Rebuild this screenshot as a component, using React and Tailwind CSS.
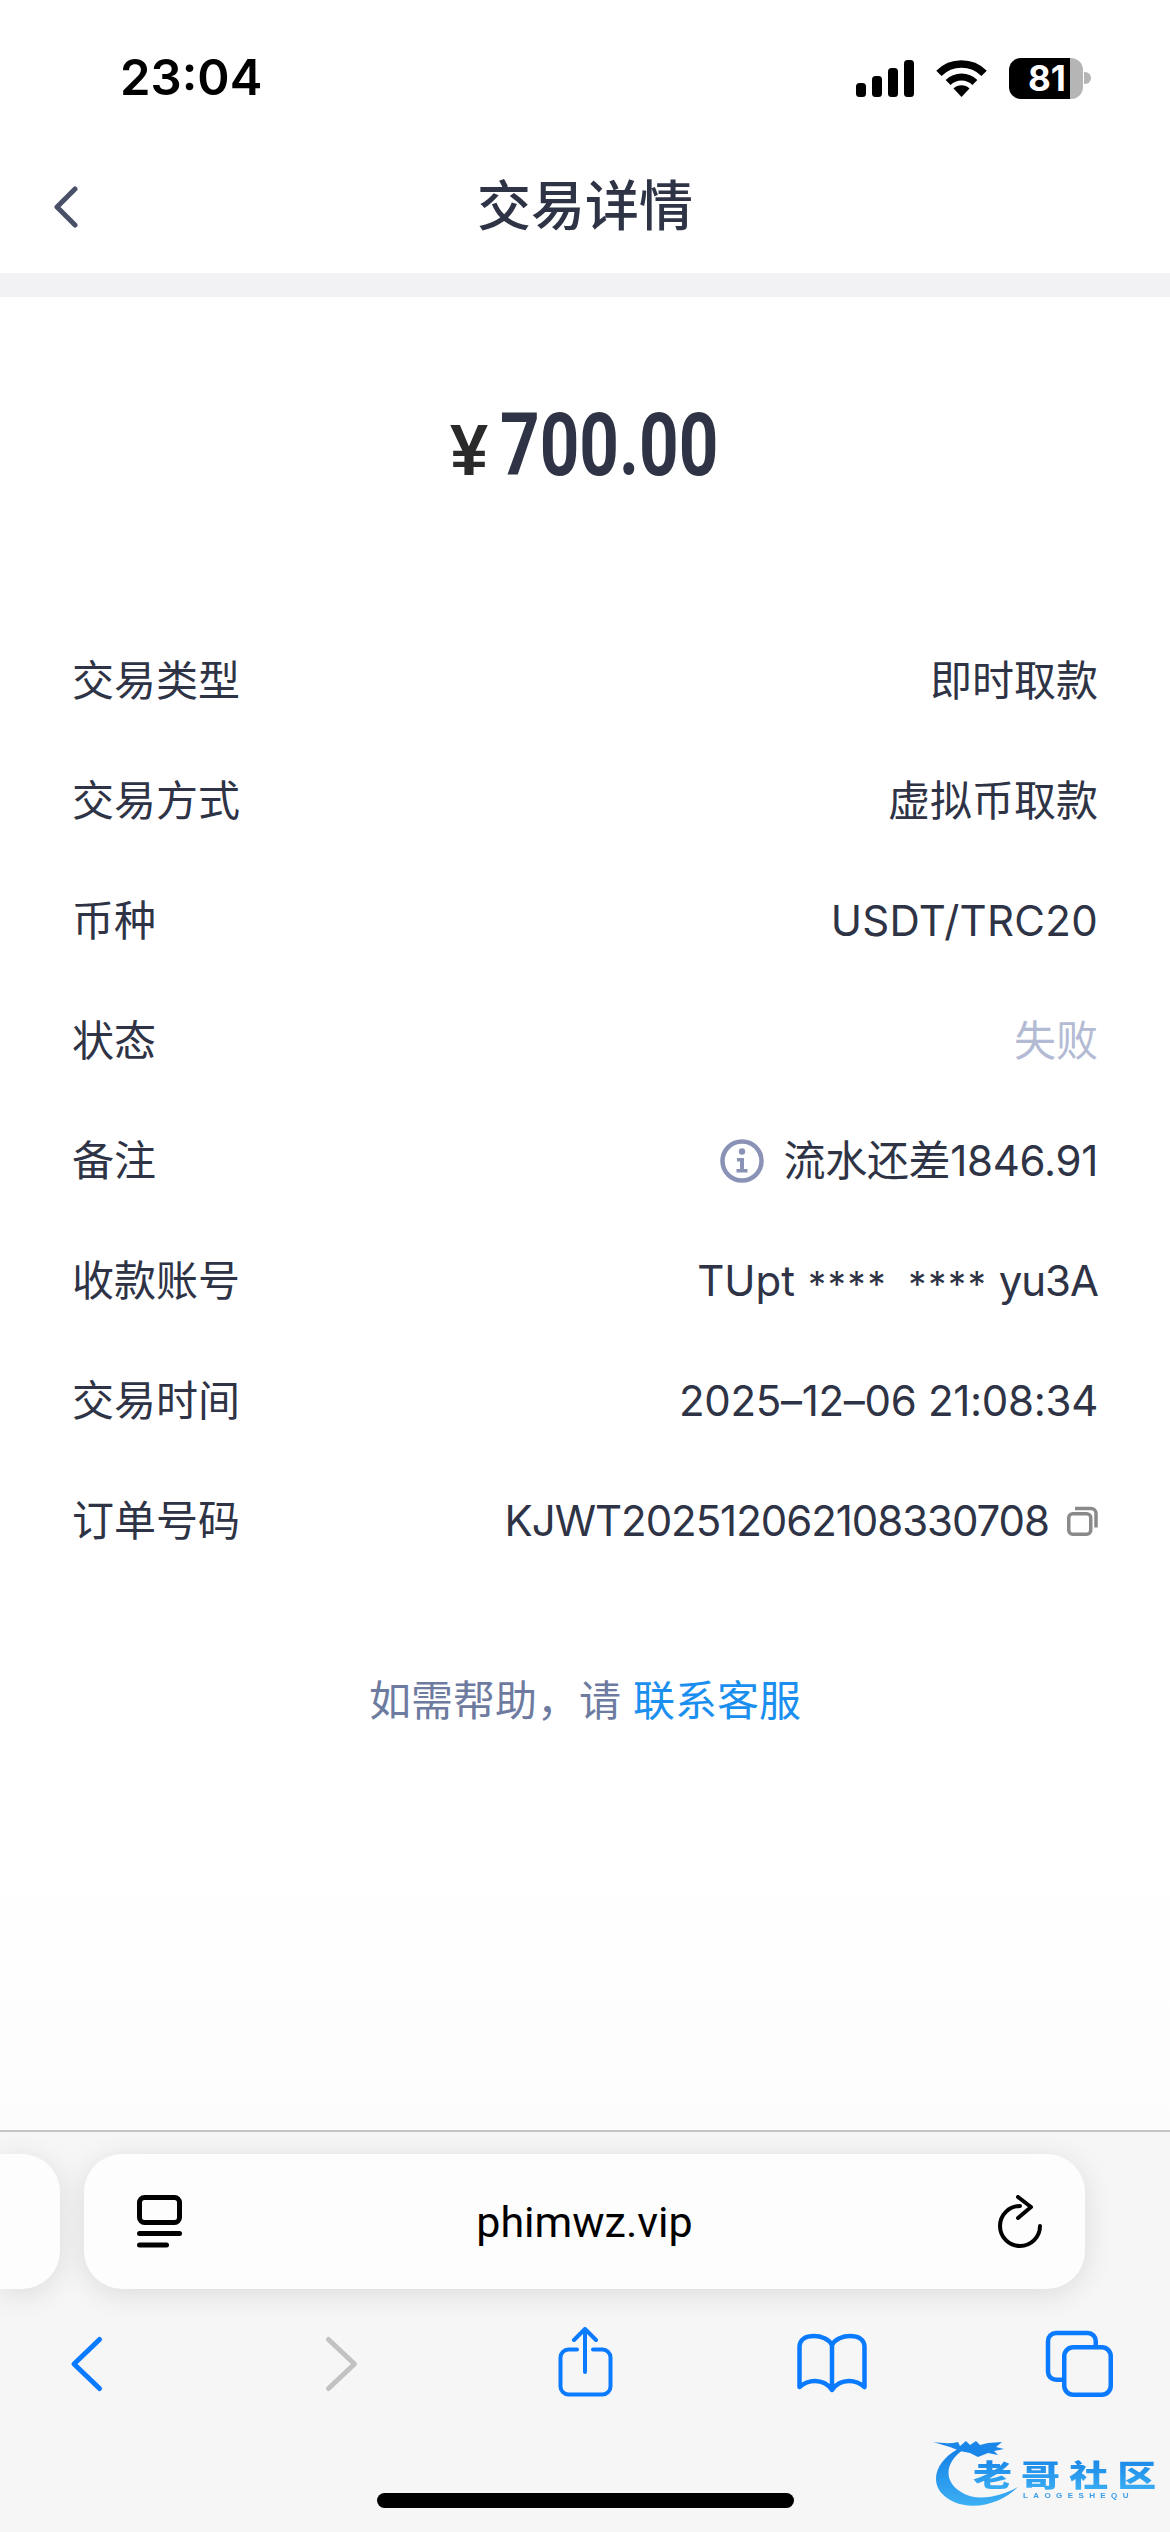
import React from "react";

const FONT = { fontFamily: 'Inter, "Noto Sans CJK SC", sans-serif' };

const rows = [
  { label: "交易类型", value: "即时取款" },
  { label: "交易方式", value: "虚拟币取款" },
  { label: "币种", value: "USDT/TRC20", track: "tracking-[0.3px]" },
  { label: "状态", value: "失败", kind: "muted" },
  { label: "备注", value: "流水还差1846.91", kind: "info", track: "tracking-[-0.3px]" },
  { label: "收款账号", kind: "account" },
  { label: "交易时间", value: "2025–12–06 21:08:34", track: "tracking-[-0.3px]" },
  { label: "订单号码", value: "KJWT202512062108330708", kind: "copy", track: "tracking-[-1.05px]" },
];

function InfoIcon() {
  return (
    <svg width="44" height="44" viewBox="0 0 44 44" className="mr-[20px]">
      <circle cx="22" cy="22" r="19.5" fill="none" stroke="#8a93b6" strokeWidth="4.5" />
      <circle cx="22" cy="12.5" r="3.2" fill="#8a93b6" />
      <path d="M17 19h7v11h3.5v3.5h-11V30h3.5v-7.5H17z" fill="#8a93b6" />
    </svg>
  );
}

function CopyIcon() {
  return (
    <svg width="31" height="30" viewBox="0 0 31 30" className="ml-[18px]" fill="none" stroke="#8a8a8a" strokeWidth="3.5">
      <rect x="1.75" y="7.75" width="22" height="20.5" rx="4" />
      <path d="M8 2.5h16a5 5 0 0 1 5 5v14" />
    </svg>
  );
}

function Signal() {
  return (
    <svg width="58" height="37" viewBox="0 0 58 37" fill="#000">
      <rect x="0" y="23" width="10" height="14" rx="3.5" />
      <rect x="16" y="16" width="10" height="21" rx="3.5" />
      <rect x="32" y="8" width="10" height="29" rx="3.5" />
      <rect x="48" y="0" width="10" height="37" rx="3.5" />
    </svg>
  );
}

function Wifi() {
  return (
    <svg width="51" height="37" viewBox="0 0 51 37" fill="none" stroke="#000">
      <path d="M2.9 13.4A32 32 0 0 1 48.1 13.4" strokeWidth="7.5" />
      <path d="M12.1 22.6A19 19 0 0 1 38.9 22.6" strokeWidth="7" />
      <path d="M25.5 37L17.5 28.5A11.5 11.5 0 0 1 33.5 28.5Z" fill="#000" stroke="none" />
    </svg>
  );
}

function TabIcon() {
  return (
    <svg width="45" height="53" viewBox="0 0 45 53" fill="none" stroke="#000" strokeWidth="5" strokeLinecap="round" className="ml-[5px]">
      <rect x="2.5" y="2.5" width="40" height="25" rx="5" />
      <path d="M2.5 38.5h40" />
      <path d="M2.5 50h27" />
    </svg>
  );
}

function Reload() {
  return (
    <svg width="44" height="53" viewBox="0 0 44 53" fill="none" stroke="#000" strokeWidth="4" strokeLinecap="round" strokeLinejoin="round" className="mr-[-5px]">
      <path d="M22 11A20 20 0 1 0 42 31" />
      <path d="M20 2L33 12L20 23" />
    </svg>
  );
}

function Tool({ children, color = "#0a7aff", sw = 4.5 }) {
  return (
    <div className="flex justify-center">
      <svg width="72" height="72" viewBox="0 0 72 72" fill="none" stroke={color} strokeWidth={sw} strokeLinecap="round" strokeLinejoin="round">
        {children}
      </svg>
    </div>
  );
}

function Account() {
  return (
    <span className="flex items-center gap-[15px]">
      <span>TUpt</span>
      <span className="ml-[-2px] text-[36px] leading-[60px] tracking-[1.8px] translate-y-[3px]">****</span>
      <span className="ml-[6px] text-[36px] leading-[60px] tracking-[1.8px] translate-y-[3px]">****</span>
      <span className="ml-[-4px] tracking-[-1px]">yu3A</span>
    </span>
  );
}

function Logo() {
  return (
    <div className="absolute left-[930px] top-[2435px] w-[225px] h-[75px] pointer-events-none blur-[0.5px]">
      <svg width="225" height="75" viewBox="0 0 225 75" className="absolute left-0 top-0">
        <defs>
          <linearGradient id="arc" x1="0" y1="0" x2="0" y2="1">
            <stop offset="0" stopColor="#1480e6" />
            <stop offset="1" stopColor="#3cb0f4" />
          </linearGradient>
        </defs>
        <path d="M28 14C2 28-3 55 24 67C45 76 72 68 88 52C70 62 46 67 31 57C14 47 14 28 33 15Z" fill="url(#arc)" />
        <path d="M3 7C12 8 20 9 28 7L30 11L36 6L40 10L46 6L50 10L58 8L72 7L66 12L74 14L64 16L68 20L58 18L48 22L40 18L30 16L20 12Z" fill="#1a86ea" />
      </svg>
      <div
        className="absolute left-[43px] top-[18px] origin-left scale-x-[1.3] whitespace-nowrap font-black text-[30px] leading-[40px] tracking-[7px] bg-[linear-gradient(180deg,#1480e6,#3cb0f4)] bg-clip-text text-transparent"
        style={{ fontFamily: '"Noto Sans CJK SC", sans-serif' }}
      >
        老哥社区
      </div>
      <div
        className="absolute left-[93px] top-[56px] whitespace-nowrap font-bold text-[8px] leading-[10px] tracking-[5.4px] text-[#3a9cec]"
        style={{ fontFamily: '"Liberation Sans", sans-serif' }}
      >
        LAOGESHEQU
      </div>
    </div>
  );
}

export default function App() {
  return (
    <div lang="zh-CN" className="relative w-[1170px] h-[2532px] overflow-hidden flex flex-col bg-white" style={FONT}>
      {/* status bar */}
      <div className="h-[138px] shrink-0 flex items-start justify-between pt-[50px] pl-[120px] pr-[79px]">
        <div className="text-[49px] leading-[56px] font-semibold text-black">23:04</div>
        <div className="flex items-center h-[56px] gap-[22px]">
          <Signal />
          <Wifi />
          <div className="flex items-center">
            <div className="w-[74px] h-[41px] rounded-[12px] bg-[linear-gradient(90deg,#000_82%,#b5b5b5_82%)] flex items-center justify-center text-white font-bold text-[35px] leading-[41px] pl-[2px]">
              81
            </div>
            <div className="w-[7px] h-[12px] ml-px rounded-r-full bg-[#b5b5b5]" />
          </div>
        </div>
      </div>

      {/* nav */}
      <div className="relative h-[135px] shrink-0 flex items-center justify-center">
        <svg width="24" height="42" viewBox="0 0 24 42" fill="none" stroke="#4a5068" strokeWidth="5" strokeLinecap="round" strokeLinejoin="round" className="absolute left-[54px] top-[48px]">
          <path d="M21 3L3 21L21 39" />
        </svg>
        <div className="text-[54px] leading-[64px] font-medium text-[#2e3345] pt-[3px]">交易详情</div>
      </div>
      <div className="h-[24px] shrink-0 bg-[#f2f2f4]" />

      {/* content */}
      <main className="flex-1 min-h-0 bg-[linear-gradient(180deg,#fff_85%,#fcfcfc_100%)]">
        <div className="h-[324px] pb-[28px] flex items-center justify-center">
          <div className="flex items-end">
            <span className="text-[72px] leading-[66px] font-bold text-[#2a2a2a] mr-[14px] mb-[2px] w-[36px] origin-left scale-x-[0.95]" style={{ fontFamily: '"Liberation Sans", sans-serif' }}>
              ¥
            </span>
            <span className="w-[220px] h-[80px] text-[87px] leading-[80px] font-bold text-[#2e3345] origin-left scale-x-[0.795] whitespace-nowrap" style={{ fontFamily: "Roboto, sans-serif" }}>
              700.00
            </span>
          </div>
        </div>

        <div className="px-[72px]">
          {rows.map(({ label, value, kind, track }) => (
            <div key={label} className="h-[120px] flex items-center justify-between text-[42px] leading-[60px] text-[#2e3345]">
              <span>{label}</span>
              <span className={`flex items-center ${track || ""} ${kind === "muted" ? "text-[#b3bbd4]" : ""}`}>
                {kind === "info" && <InfoIcon />}
                {kind === "account" ? <Account /> : <span>{value}</span>}
                {kind === "copy" && <CopyIcon />}
              </span>
            </div>
          ))}
        </div>

        <div className="mt-[90px] h-[60px] text-center text-[42px] leading-[60px] text-[#6e7ba0]">
          如需帮助，请 <span className="text-[#1a8fef]">联系客服</span>
        </div>
      </main>

      {/* browser chrome */}
      <div className="h-[402px] shrink-0 overflow-hidden bg-[#f6f6f6] border-t-2 border-[#c4c4c4]">
        <div className="flex gap-[24px] pt-[22px]">
          <div className="w-[60px] h-[135px] rounded-r-[38px] bg-[#fdfdfd] shadow-[0_5px_30px_rgba(0,0,0,0.11)]" />
          <div className="w-[1001px] h-[135px] rounded-[38px] bg-[#fdfdfd] shadow-[0_5px_30px_rgba(0,0,0,0.11)] grid grid-cols-[1fr_auto_1fr] items-center px-[48px]">
            <TabIcon />
            <div className="text-[43px] leading-[56px] text-black" style={{ fontFamily: "Roboto, sans-serif" }}>phimwz.vip</div>
            <div className="flex justify-end"><Reload /></div>
          </div>
        </div>

        <div className="mt-[38px] ml-[-37px] w-[1241px] grid grid-cols-5">
          <Tool sw={5}><path d="M48.5 12.5L23 37L48.5 61.5" /></Tool>
          <Tool color="#c2c2c2" sw={5}><path d="M29.5 12.5L55.5 37L29.5 61.5" /></Tool>
          <Tool sw={4}>
            <g transform="translate(2 0)">
              <path d="M28 22.5H19.5a8 8 0 0 0-8 8V59.5a8 8 0 0 0 8 8H53.5a8 8 0 0 0 8-8V30.5a8 8 0 0 0-8-8H44" />
              <path d="M36 45V3M25 13L36 2L47 13" />
            </g>
          </Tool>
          <Tool>
            <path d="M36 18C33 12 25 9 18 9C10 9 3.5 12 3.5 20V60C8 56 13 54 19 54C26 54 32 57 36 63C40 57 46 54 53 54C59 54 64 56 68.5 60V20C68.5 12 62 9 54 9C47 9 39 12 36 18V63" />
          </Tool>
          <Tool>
            <rect x="20.25" y="20.25" width="46.5" height="47.5" rx="9" />
            <path d="M18 52.75H12a8 8 0 0 1-8-8V14a8 8 0 0 1 8-8H43.75a8 8 0 0 1 8 8V18" />
          </Tool>
        </div>

        <div className="mt-[94px] mx-auto w-[417px] h-[15px] rounded-full bg-black" />
      </div>

      <Logo />
    </div>
  );
}
